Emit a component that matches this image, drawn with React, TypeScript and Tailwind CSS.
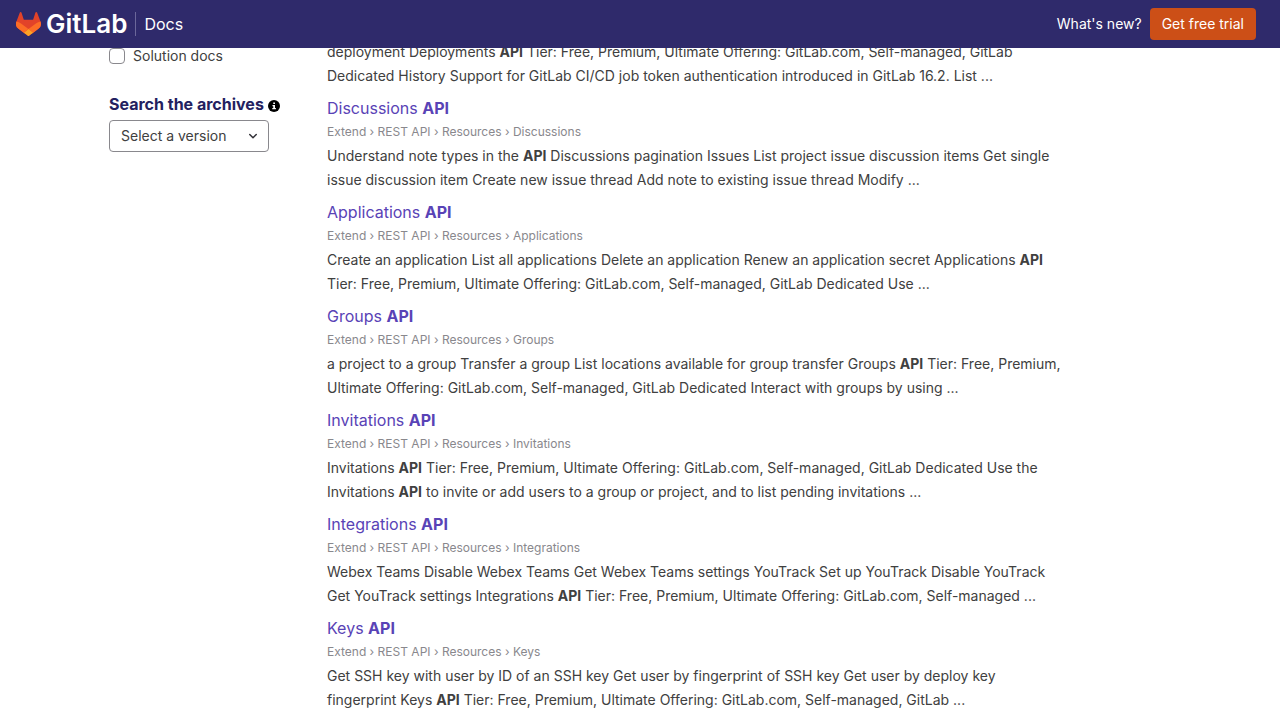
import type { ReactNode } from "react";

type Result = { name: string; body: ReactNode };

const api = <strong className="font-bold">API</strong>;

const results: Result[] = [
  {
    name: "Discussions",
    body: (
      <>
        Understand note types in the {api} Discussions pagination Issues List project issue discussion items Get single
        issue discussion item Create new issue thread Add note to existing issue thread Modify ...
      </>
    ),
  },
  {
    name: "Applications",
    body: (
      <>
        Create an application List all applications Delete an application Renew an application secret Applications {api}{" "}
        Tier: Free, Premium, Ultimate Offering: GitLab.com, Self-managed, GitLab Dedicated Use ...
      </>
    ),
  },
  {
    name: "Groups",
    body: (
      <>
        a project to a group Transfer a group List locations available for group transfer Groups {api} Tier: Free,
        Premium, Ultimate Offering: GitLab.com, Self-managed, GitLab Dedicated Interact with groups by using ...
      </>
    ),
  },
  {
    name: "Invitations",
    body: (
      <>
        Invitations {api} Tier: Free, Premium, Ultimate Offering: GitLab.com, Self-managed, GitLab Dedicated Use the
        Invitations {api} to invite or add users to a group or project, and to list pending invitations ...
      </>
    ),
  },
  {
    name: "Integrations",
    body: (
      <>
        Webex Teams Disable Webex Teams Get Webex Teams settings YouTrack Set up YouTrack Disable YouTrack Get YouTrack
        settings Integrations {api} Tier: Free, Premium, Ultimate Offering: GitLab.com, Self-managed ...
      </>
    ),
  },
  {
    name: "Keys",
    body: (
      <>
        Get SSH key with user by ID of an SSH key Get user by fingerprint of SSH key Get user by deploy key fingerprint
        Keys {api} Tier: Free, Premium, Ultimate Offering: GitLab.com, Self-managed, GitLab ...
      </>
    ),
  },
];

function Tanuki() {
  return (
    <svg viewBox="0 0 25 24" className="h-6 w-[25px] shrink-0" aria-hidden="true">
      <path
        d="m24.507 9.5-.034-.09L21.082.562a.896.896 0 0 0-1.694.091l-2.29 7.01H7.825L5.535.653a.898.898 0 0 0-1.694-.09L.451 9.411.416 9.5a6.297 6.297 0 0 0 2.09 7.278l.012.01.03.022 5.16 3.867 2.56 1.935 1.554 1.176a1.051 1.051 0 0 0 1.268 0l1.555-1.176 2.56-1.935 5.197-3.89.014-.01A6.297 6.297 0 0 0 24.507 9.5Z"
        fill="#E24329"
      />
      <path
        d="m24.507 9.5-.034-.09a11.44 11.44 0 0 0-4.56 2.051l-7.447 5.632 4.742 3.584 5.197-3.89.014-.01A6.297 6.297 0 0 0 24.507 9.5Z"
        fill="#FC6D26"
      />
      <path
        d="m7.707 20.677 2.56 1.935 1.555 1.176a1.051 1.051 0 0 0 1.268 0l1.555-1.176 2.56-1.935-4.743-3.584-4.755 3.584Z"
        fill="#FCA326"
      />
      <path
        d="M5.01 11.461a11.43 11.43 0 0 0-4.56-2.05L.416 9.5a6.297 6.297 0 0 0 2.09 7.278l.012.01.03.022 5.16 3.867 4.745-3.584-7.444-5.632Z"
        fill="#FC6D26"
      />
    </svg>
  );
}

function Header() {
  return (
    <header className="sticky top-0 z-10 flex h-12 items-center justify-between bg-[#2f2a6b] pr-6 pl-4 text-white">
      <a href="#home" className="flex items-center">
        <Tanuki />
        <span className="ml-[5px] text-[26px] leading-6 font-semibold">GitLab</span>
        <span className="ml-2 border-l border-[#6b679a] pl-2 text-base leading-6">Docs</span>
      </a>
      <nav className="flex items-center gap-2 text-sm">
        <a href="#whats-new">What's new?</a>
        <a href="#trial" className="flex h-8 items-center rounded bg-[#cc4f17] px-3">
          Get free trial
        </a>
      </nav>
    </header>
  );
}

function Sidebar() {
  return (
    <aside className="w-[218px] shrink-0 pt-1">
      <label className="flex items-center gap-2 text-sm leading-6">
        <input type="checkbox" className="size-4 appearance-none rounded border border-[#89888d] bg-white" />
        Solution docs
      </label>
      <div className="mt-6 flex items-center gap-1">
        <label htmlFor="version" className="text-base font-bold text-[#232160]">
          Search the archives
        </label>
        <svg viewBox="0 0 16 16" className="mt-1 size-3" role="img" aria-label="Information">
          <circle cx="8" cy="8" r="8" fill="#000" />
          <path d="M7 3.2h2.3v2.2H7zM6 6.6h3.3v4.2h1.2v1.6H5.7v-1.6H7V8.2H6z" fill="#fff" />
        </svg>
      </div>
      <div className="relative mt-1 w-40">
        <select
          id="version"
          className="h-8 w-full appearance-none rounded border border-[#89888d] bg-white pr-8 pl-[11px] text-sm text-[#404040]"
        >
          <option>Select a version</option>
        </select>
        <svg viewBox="0 0 16 16" className="pointer-events-none absolute top-2 right-2 size-4" aria-hidden="true">
          <path d="M4.75 6.5 8 9.75l3.25-3.25" fill="none" stroke="#333238" strokeWidth="1.5" strokeLinecap="round" strokeLinejoin="round" />
        </svg>
      </div>
    </aside>
  );
}

export default function App() {
  return (
    <div className="min-h-screen bg-white font-['Inter',sans-serif] text-[#404040]">
      <Header />
      <div className="mx-auto -mt-2 flex max-w-[1062px]">
        <Sidebar />
        <main className="max-w-[736px] min-w-0 flex-1">
          <ul className="flex flex-col gap-2">
            <li>
              <p className="text-sm leading-6">
                deployment Deployments {api} Tier: Free, Premium, Ultimate Offering: GitLab.com, Self-managed, GitLab
                Dedicated History Support for GitLab CI/CD job token authentication introduced in GitLab 16.2. List ...
              </p>
            </li>
            {results.map((r) => (
              <li key={r.name}>
                <a href={`#${r.name.toLowerCase()}`} className="block text-base leading-6 text-[#5943b6]">
                  {r.name} {api}
                </a>
                <div className="text-xs leading-6 text-[#89888d]">
                  Extend › REST API › Resources › {r.name}
                </div>
                <p className="text-sm leading-6">{r.body}</p>
              </li>
            ))}
          </ul>
        </main>
      </div>
    </div>
  );
}
